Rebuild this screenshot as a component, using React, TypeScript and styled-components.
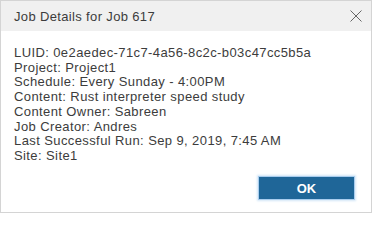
import React from "react";
import styled, { createGlobalStyle } from "styled-components";

const Global = createGlobalStyle`
  html, body { margin: 0; padding: 0; background: #ffffff; }
  body { font-family: "Liberation Sans", Arial, sans-serif; }
`;

const Dialog = styled.div`
  box-sizing: border-box;
  width: 372px;
  height: 213px;
  border: 1px solid #d4d4d4;
  background: #ffffff;
  display: flex;
  flex-direction: column;
`;

const Header = styled.div`
  height: 30px;
  background: #f0f0f0;
  display: flex;
  align-items: center;
  justify-content: space-between;
  padding: 0 9px 0 13px;
  flex-shrink: 0;
`;

const Title = styled.div`
  font-size: 13px;
  letter-spacing: 0.35px;
  color: #3c3c3c;
`;

const CloseButton = styled.button`
  width: 12px;
  height: 12px;
  padding: 0;
  border: 0;
  background: transparent;
  display: flex;
  align-items: center;
  justify-content: center;
`;

const Body = styled.div`
  flex: 1;
  display: flex;
  flex-direction: column;
  padding: 15px 17px 13px 13px;
`;

const Info = styled.div`
  display: flex;
  flex-direction: column;
  font-size: 13px;
  line-height: 14.7px;
  letter-spacing: 0.4px;
  color: #3c3c3c;
`;

const Footer = styled.div`
  margin-top: auto;
  display: flex;
  justify-content: flex-end;
`;

const OkButton = styled.button`
  width: 95px;
  height: 22px;
  border: 0;
  background: #1f6698;
  color: #ffffff;
  font-family: "Liberation Sans", Arial, sans-serif;
  font-weight: bold;
  font-size: 13px;
  box-shadow: 0 0 0 1px #a9cdee, 0 0 2px 2px #d3e6f7;
  cursor: pointer;
`;

const rows = [
  "LUID: 0e2aedec-71c7-4a56-8c2c-b03c47cc5b5a",
  "Project: Project1",
  "Schedule: Every Sunday - 4:00PM",
  "Content: Rust interpreter speed study",
  "Content Owner: Sabreen",
  "Job Creator: Andres",
  "Last Successful Run: Sep 9, 2019, 7:45 AM",
  "Site: Site1",
];

export default function App() {
  return (
    <>
      <Global />
      <Dialog>
        <Header>
          <Title>Job Details for Job 617</Title>
          <CloseButton aria-label="Close">
            <svg width="12" height="12" viewBox="0 0 12 12">
              <path d="M0.5 0.5 L11.5 11.5 M11.5 0.5 L0.5 11.5" stroke="#666" strokeWidth="1" fill="none" />
            </svg>
          </CloseButton>
        </Header>
        <Body>
          <Info>
            {rows.map((r) => (
              <div key={r}>{r}</div>
            ))}
          </Info>
          <Footer>
            <OkButton>OK</OkButton>
          </Footer>
        </Body>
      </Dialog>
    </>
  );
}
